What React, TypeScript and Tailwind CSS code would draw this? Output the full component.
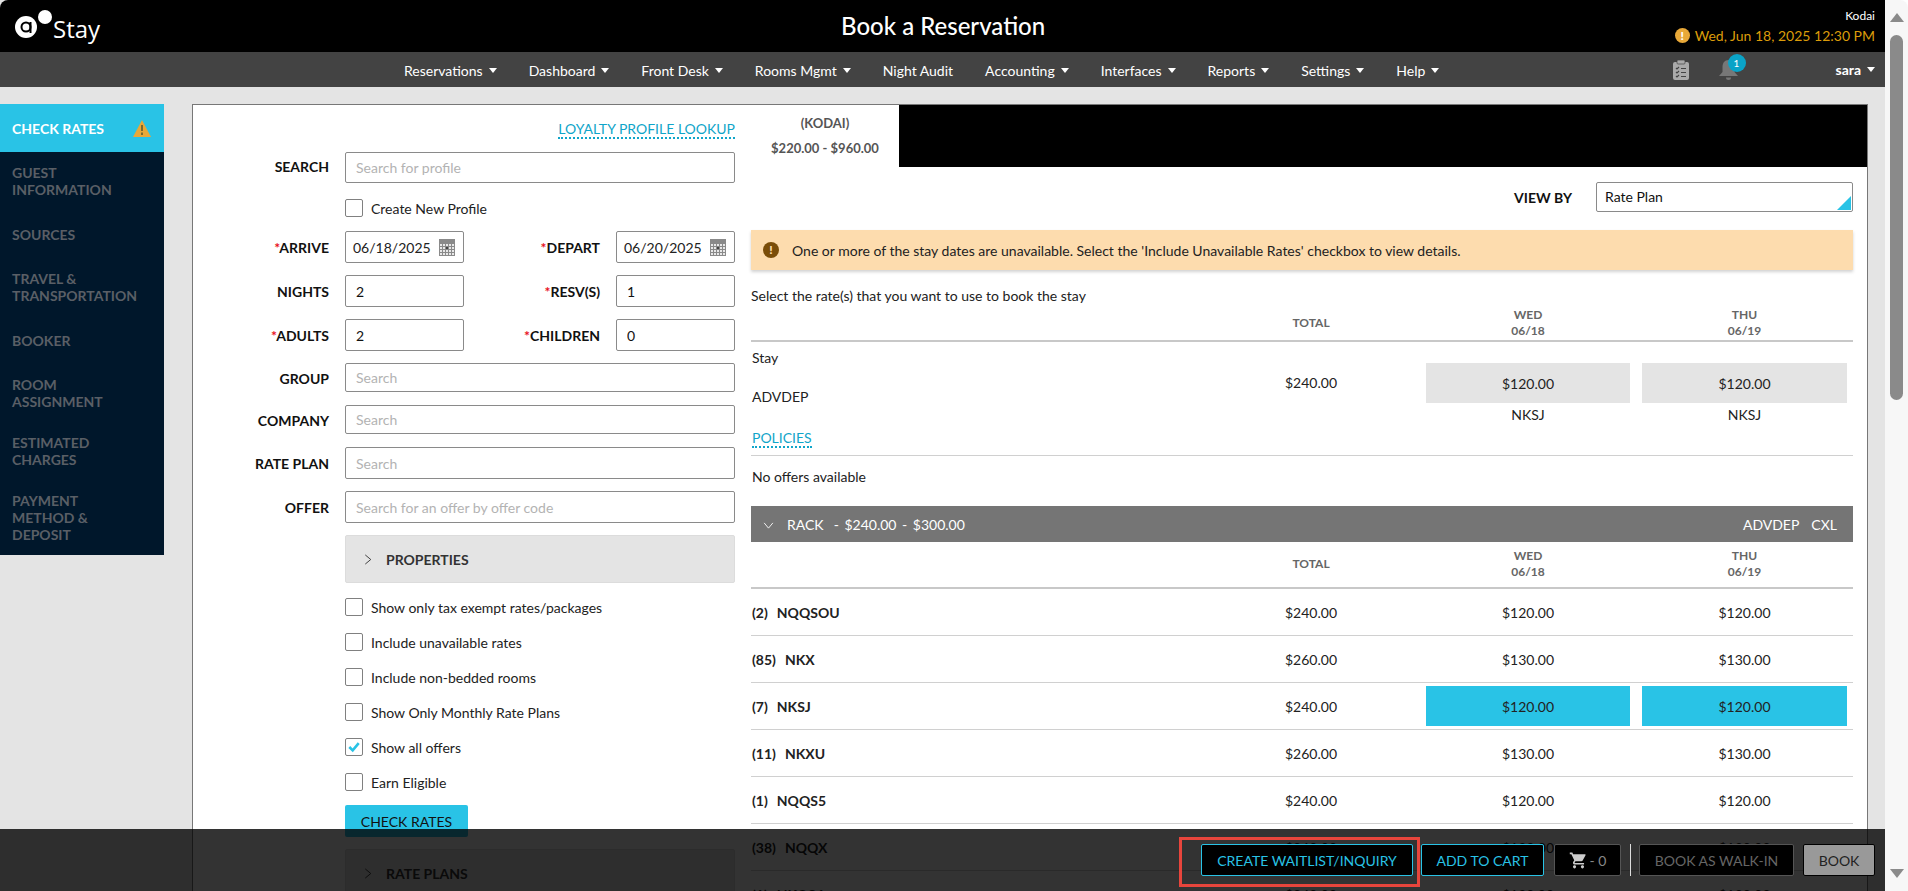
import { MdShoppingCart } from "react-icons/md";

const navItems = [
  { label: "Reservations", caret: true },
  { label: "Dashboard", caret: true },
  { label: "Front Desk", caret: true },
  { label: "Rooms Mgmt", caret: true },
  { label: "Night Audit", caret: false },
  { label: "Accounting", caret: true },
  { label: "Interfaces", caret: true },
  { label: "Reports", caret: true },
  { label: "Settings", caret: true },
  { label: "Help", caret: true },
];

const sideItems = [
  { lines: ["GUEST", "INFORMATION"], top: "mt-[12px]" },
  { lines: ["SOURCES"], top: "mt-[28px]" },
  { lines: ["TRAVEL &", "TRANSPORTATION"], top: "mt-[27px]" },
  { lines: ["BOOKER"], top: "mt-[28px]" },
  { lines: ["ROOM", "ASSIGNMENT"], top: "mt-[27px]" },
  { lines: ["ESTIMATED", "CHARGES"], top: "mt-[24px]" },
  { lines: ["PAYMENT", "METHOD &", "DEPOSIT"], top: "mt-[24px]" },
];

const checks = [
  { label: "Show only tax exempt rates/packages", on: false },
  { label: "Include unavailable rates", on: false },
  { label: "Include non-bedded rooms", on: false },
  { label: "Show Only Monthly Rate Plans", on: false },
  { label: "Show all offers", on: true },
  { label: "Earn Eligible", on: false },
];

const rates = [
  { count: "(2)", code: "NQQSOU", total: "$240.00", night: "$120.00" },
  { count: "(85)", code: "NKX", total: "$260.00", night: "$130.00" },
  { count: "(7)", code: "NKSJ", total: "$240.00", night: "$120.00", picked: true },
  { count: "(11)", code: "NKXU", total: "$260.00", night: "$130.00" },
  { count: "(1)", code: "NQQS5", total: "$240.00", night: "$120.00" },
  { count: "(38)", code: "NQQX", total: "$260.00", night: "$130.00" },
  { count: "(1)", code: "NKQS4", total: "$240.00", night: "$120.00" },
];

function Caret() {
  return <span className="ml-[6px] inline-block h-0 w-0 border-x-[4px] border-t-[5px] border-x-transparent border-t-white" />;
}

function CalendarIcon() {
  return (
    <svg viewBox="0 0 16 17" className="h-[17px] w-[16px] shrink-0" aria-hidden="true">
      <rect width="16" height="17" fill="#8a8a8a" />
      <g fill="#e8e8e8">
        {[5, 8, 11, 14].map((y) =>
          [1, 4, 7, 10, 13].map((x) => <rect key={`${x}-${y}`} x={x} y={y} width="2" height="2" />)
        )}
      </g>
      <rect x="7" y="8" width="2" height="2" fill="#444" />
    </svg>
  );
}

function Box({ on }: { on?: boolean }) {
  return (
    <span className="flex h-[18px] w-[18px] shrink-0 items-center justify-center rounded-[2px] border border-[#808080] bg-white">
      {on && (
        <svg viewBox="0 0 14 14" className="h-[12px] w-[12px]" aria-hidden="true">
          <path d="M1.5 7 L5.5 11 L12.5 2.5" fill="none" stroke="#29c3e6" strokeWidth="3" />
        </svg>
      )}
    </span>
  );
}

function FieldLabel({ text, required, className = "" }: { text: string; required?: boolean; className?: string }) {
  return (
    <label className={`${className} w-[136px] shrink-0 text-right text-[14px] font-bold text-[#111]`}>
      {required && <span className="text-[#e8101c]">*</span>}
      {text}
    </label>
  );
}

function Field({ value, placeholder, height = "h-[32px]", width = "w-[390px]" }: { value?: string; placeholder?: string; height?: string; width?: string }) {
  return (
    <input
      readOnly
      value={value}
      placeholder={placeholder}
      className={`${height} ${width} ml-[16px] rounded-[2px] border border-[#8a8a8a] bg-white px-[10px] text-[14px] text-[#111] outline-none placeholder:text-[#b3b3b3]`}
    />
  );
}

function DateField({ value }: { value: string }) {
  return (
    <div className="ml-[16px] flex h-[32px] w-[119px] items-center justify-between rounded-[2px] border border-[#8a8a8a] bg-white pl-[7px] pr-[8px] text-[14px] text-[#222]">
      <span>{value}</span>
      <CalendarIcon />
    </div>
  );
}

function Accordion({ title, className }: { title: string; className: string }) {
  return (
    <div className={`${className} flex h-[48px] w-[390px] shrink-0 items-center rounded-[2px] border border-[#dcdcdc] bg-[#e4e4e4] pl-[18px] text-[14px] font-bold text-[#333]`}>
      <svg viewBox="0 0 8 12" className="mr-[14px] h-[11px] w-[8px]" aria-hidden="true">
        <path d="M1 1 L7 6 L1 11" fill="none" stroke="#333" strokeWidth="1" />
      </svg>
      {title}
    </div>
  );
}

function DayHead({ inset }: { inset: string }) {
  return (
    <div className={`${inset} flex h-[47px] items-end border-b-2 border-[#c8c8c8] text-center text-[12px] font-bold leading-[16px] text-[#666]`}>
      <div className="w-[459px]" />
      <div className="flex h-[32px] w-[202px] items-center justify-center">TOTAL</div>
      <div className="ml-[14px] w-[204px]">
        WED
        <br />
        06/18
      </div>
      <div className="ml-[12px] w-[205px]">
        THU
        <br />
        06/19
      </div>
    </div>
  );
}

function RateRow({ count, code, total, night, picked }: { count: string; code: string; total: string; night: string; picked?: boolean }) {
  const cell = `flex h-[40px] items-center justify-center ${picked ? "bg-[#29c3e6]" : ""}`;
  return (
    <div className="flex h-[47px] items-center border-b border-[#d0d0d0] text-[14px] text-[#222]">
      <div className="w-[459px] pl-[1px] font-bold">
        {count}
        <span className="ml-[9px]">{code}</span>
      </div>
      <div className="w-[202px] text-center">{total}</div>
      <div className={`ml-[14px] w-[204px] ${cell}`}>{night}</div>
      <div className={`ml-[12px] w-[205px] ${cell}`}>{night}</div>
    </div>
  );
}

function FormColumn() {
  return (
    <div className="flex w-[542px] shrink-0 flex-col items-end pt-[16px]">
      <a className="h-[18px] border-b-2 border-dotted border-[#10a5c9] text-[14px] leading-[16px] text-[#10a5c9]">LOYALTY PROFILE LOOKUP</a>

      <div className="mt-[13px] flex w-full items-center">
        <FieldLabel text="SEARCH" className="-mt-[2px]" />
        <Field placeholder="Search for profile" height="h-[31px]" />
      </div>

      <div className="mt-[16px] flex w-[390px] items-center">
        <Box />
        <span className="ml-[8px] h-[18px] text-[14px] leading-[20px] text-[#222]">Create New Profile</span>
      </div>

      <div className="mt-[14px] flex w-full items-center">
        <FieldLabel text="ARRIVE" required />
        <DateField value="06/18/2025" />
        <FieldLabel text="DEPART" required />
        <DateField value="06/20/2025" />
      </div>

      <div className="mt-[12px] flex w-full items-center">
        <FieldLabel text="NIGHTS" />
        <Field value="2" width="w-[119px]" />
        <FieldLabel text="RESV(S)" required />
        <Field value="1" width="w-[119px]" />
      </div>

      <div className="mt-[12px] flex w-full items-center">
        <FieldLabel text="ADULTS" required />
        <Field value="2" width="w-[119px]" />
        <FieldLabel text="CHILDREN" required />
        <Field value="0" width="w-[119px]" />
      </div>

      <div className="mt-[12px] flex w-full items-center">
        <FieldLabel text="GROUP" className="mt-[2px]" />
        <Field placeholder="Search" height="h-[29px]" />
      </div>
      <div className="mt-[13px] flex w-full items-center">
        <FieldLabel text="COMPANY" className="mt-[2px]" />
        <Field placeholder="Search" height="h-[29px]" />
      </div>
      <div className="mt-[13px] flex w-full items-center">
        <FieldLabel text="RATE PLAN" />
        <Field placeholder="Search" />
      </div>
      <div className="mt-[12px] flex w-full items-center">
        <FieldLabel text="OFFER" />
        <Field placeholder="Search for an offer by offer code" />
      </div>

      <Accordion title="PROPERTIES" className="mt-[12px]" />

      <div className="mt-[15px] flex w-[390px] flex-col gap-[17px]">
        {checks.map((item) => (
          <div key={item.label} className="flex h-[18px] items-start">
            <Box on={item.on} />
            <span className="ml-[8px] h-[18px] text-[14px] leading-[20px] text-[#222]">{item.label}</span>
          </div>
        ))}
      </div>

      <div className="mt-[14px] w-[390px]">
        <button className="h-[32px] w-[123px] rounded-[2px] bg-[#29c3e6] text-[14px] text-[#111]">CHECK RATES</button>
      </div>

      <Accordion title="RATE PLANS" className="mt-[12px]" />
    </div>
  );
}

function RatesColumn() {
  return (
    <div className="min-w-0 flex-1">
      <div className="flex h-[62px] bg-black">
        <div className="flex w-[148px] flex-col items-center bg-white pt-[9px] text-[13px] font-bold text-[#555]">
          <div className="leading-[18px]">(KODAI)</div>
          <div className="mt-[7px] leading-[18px]">$220.00 - $960.00</div>
        </div>
      </div>

      <div className="w-[1102px]">
        <div className="mt-[15px] flex items-center justify-end">
          <span className="mr-[24px] text-[14px] font-bold text-[#111]">VIEW BY</span>
          <div className="relative flex h-[30px] w-[257px] items-center rounded-[2px] border border-[#8a8a8a] pb-[1px] pl-[8px] text-[14px] text-[#111]">
            Rate Plan
            <span className="absolute bottom-[1px] right-[1px] h-0 w-0 border-b-[14px] border-l-[14px] border-b-[#29c3e6] border-l-transparent" />
          </div>
        </div>

        <div className="mt-[18px] flex h-[40px] items-center bg-[#fddcae] pl-[12px] text-[14px] text-[#222] shadow-[0_2px_3px_rgba(0,0,0,0.18)]">
          <span className="mr-[13px] flex h-[16px] w-[16px] items-center justify-center rounded-full bg-[#7a4d08] text-[12px] font-black leading-none text-[#fddcae]">!</span>
          One or more of the stay dates are unavailable. Select the 'Include Unavailable Rates' checkbox to view details.
        </div>

        <div className="relative h-[72px]">
          <div className="absolute left-0 top-[17px] text-[14px] leading-[18px] text-[#222]">Select the rate(s) that you want to use to book the stay</div>
          <div className="absolute inset-x-0 bottom-0">
            <DayHead inset="pb-[1px]" />
          </div>
        </div>

        <div className="flex h-[114px] border-b border-[#d0d0d0] text-[14px] text-[#222]">
          <div className="flex w-[459px] flex-col pl-[1px]">
            <div className="mt-[7px] leading-[18px]">Stay</div>
            <div className="mt-[21px] leading-[18px]">ADVDEP</div>
            <div className="mt-[21px]">
              <a className="inline-block h-[18px] border-b-2 border-dotted border-[#10a5c9] leading-[16px] text-[#10a5c9]">POLICIES</a>
            </div>
          </div>
          <div className="w-[202px] pt-[31px] text-center leading-[20px]">$240.00</div>
          <div className="ml-[14px] w-[204px] pt-[21px] text-center">
            <div className="flex h-[40px] items-center justify-center bg-[#e4e4e4]">$120.00</div>
            <div className="mt-[3px] leading-[18px]">NKSJ</div>
          </div>
          <div className="ml-[12px] w-[205px] pt-[21px] text-center">
            <div className="flex h-[40px] items-center justify-center bg-[#e4e4e4]">$120.00</div>
            <div className="mt-[3px] leading-[18px]">NKSJ</div>
          </div>
        </div>

        <div className="flex h-[50px] items-start pl-[1px] pt-[12px] text-[14px] leading-[18px] text-[#222]">No offers available</div>

        <div className="flex h-[36px] items-center bg-[#757575] pl-[12px] pr-[16px] text-[14px] text-white">
          <svg viewBox="0 0 12 8" className="mr-[13px] mt-[2px] h-[7px] w-[11px]" aria-hidden="true">
            <path d="M1 1 L6 7 L11 1" fill="none" stroke="#fff" strokeWidth="1" />
          </svg>
          RACK
          <span className="ml-[10px] [word-spacing:2px]">- $240.00 - $300.00</span>
          <span className="ml-auto">ADVDEP</span>
          <span className="ml-[12px]">CXL</span>
        </div>

        <DayHead inset="pb-[7px]" />
        {rates.map((row) => (
          <RateRow key={row.code} {...row} />
        ))}
      </div>
    </div>
  );
}

function Footer() {
  const base = "flex h-[32px] items-center justify-center rounded-[2px] border text-[14px]";
  return (
    <div className="absolute inset-x-0 bottom-0 flex h-[62px] items-start justify-end bg-[rgba(0,0,0,0.8)] pr-[10px] pt-[15px]">
      <div className="relative">
        <button className={`${base} w-[212px] border-[#29c3e6] bg-black text-[#29c3e6]`}>CREATE WAITLIST/INQUIRY</button>
        <span className="absolute -bottom-[11px] -left-[22px] -right-[7px] -top-[7px] border-[3px] border-[#e8453c]" />
      </div>
      <button className={`${base} ml-[8px] w-[123px] border-[#29c3e6] bg-black text-[#29c3e6]`}>ADD TO CART</button>
      <button className={`${base} ml-[10px] w-[67px] border-[#555] bg-black text-[#888]`}>
        <MdShoppingCart className="mr-[2px] h-[19px] w-[19px] text-[#ccc]" />- 0
      </button>
      <span className="ml-[9px] h-[32px] w-px bg-[#ddd]" />
      <button className={`${base} ml-[8px] w-[155px] border-[#555] bg-black text-[#666]`}>BOOK AS WALK-IN</button>
      <button className={`${base} ml-[9px] w-[72px] border-black bg-[#999] text-[#222]`}>BOOK</button>
    </div>
  );
}

function Scrollbar() {
  return (
    <div className="flex w-[23px] shrink-0 flex-col items-center rounded-tr-[8px] bg-[#f7f7f7]">
      <span className="mt-[13px] h-0 w-0 border-x-[7px] border-b-[9px] border-x-transparent border-b-[#8a8a8a]" />
      <span className="mt-[13px] h-[365px] w-[13px] rounded-full bg-[#8a8a8a]" />
      <span className="mt-[469px] h-0 w-0 border-x-[7px] border-t-[9px] border-x-transparent border-t-[#8a8a8a]" />
    </div>
  );
}

export default function App() {
  return (
    <div className="flex h-[891px] w-full overflow-hidden bg-white font-['Lato',sans-serif]">
      <div className="relative flex min-w-0 flex-1 flex-col overflow-hidden bg-[#e4e4e4]">
        <header className="relative flex h-[52px] shrink-0 items-center rounded-tl-[8px] bg-black text-white">
          <svg viewBox="0 0 56 44" className="-mt-[8px] ml-[10px] h-[44px] w-[56px]" aria-hidden="true">
            <circle cx="16" cy="27" r="11" fill="#fff" />
            <circle cx="35" cy="17" r="7" fill="#fff" />
            <circle cx="16" cy="27" r="4.5" fill="none" stroke="#000" strokeWidth="2" />
            <path d="M20.5 22 V33" stroke="#000" strokeWidth="2" fill="none" />
          </svg>
          <span className="ml-[-13px] mt-[5px] font-['Open_Sans',sans-serif] text-[24px] leading-none">Stay</span>
          <h1 className="absolute left-[841px] top-[10px] text-[24px] font-medium leading-[32px]">Book a Reservation</h1>
          <div className="ml-auto mr-[10px] mt-[1px] text-right">
            <div className="text-[12px] leading-[16px]">Kodai</div>
            <div className="mt-[2px] flex items-center text-[14px] leading-[20px] text-[#dc9c0a]">
              <span className="mr-[5px] flex h-[15px] w-[15px] items-center justify-center rounded-full bg-[#e8a838] text-[12px] font-black text-white">!</span>
              Wed, Jun 18, 2025 12:30 PM
            </div>
          </div>
        </header>

        <nav className="flex h-[35px] shrink-0 items-center bg-[#434343] pl-[404px] pr-[10px] text-[14px] text-white">
          {navItems.map((item) => (
            <span key={item.label} className="mr-[32px] flex items-center whitespace-nowrap pt-[1px]">
              {item.label}
              {item.caret && <Caret />}
            </span>
          ))}
          <svg viewBox="0 0 16 20" className="ml-auto h-[20px] w-[16px]" aria-hidden="true">
            <rect y="2" width="16" height="18" rx="2" fill="#aaa" />
            <rect x="4" width="8" height="4" rx="1" fill="#aaa" stroke="#434343" strokeWidth="0.7" />
            <path d="M3 8 L4 9 L6 7 M3 12 L4 13 L6 11 M3 16 L4 17 L6 15 M8 8.5 H13 M8 12.5 H13 M8 16.5 H13" stroke="#434343" strokeWidth="1.1" fill="none" />
          </svg>
          <div className="relative ml-[30px] h-[20px] w-[19px]">
            <svg viewBox="0 0 19 20" className="h-[20px] w-[19px]" aria-hidden="true">
              <path d="M9.5 0 C13.5 0 15.5 3 15.5 7 V12 L19 16 H0 L3.5 12 V7 C3.5 3 5.5 0 9.5 0 Z" fill="#777" />
              <path d="M7 17.5 H12 A2.5 2.5 0 0 1 7 17.5 Z" fill="#777" />
            </svg>
            <span className="absolute -right-[8px] -top-[6px] flex h-[18px] w-[18px] items-center justify-center rounded-full bg-[#0aa3c7] text-[10px] leading-none text-white">1</span>
          </div>
          <span className="ml-[98px] flex items-center font-bold leading-none">
            sara
            <Caret />
          </span>
        </nav>

        <main className="flex min-h-0 flex-1 items-start pt-[17px]">
          <aside className="h-[451px] w-[164px] shrink-0 bg-[#00172b]">
            <div className="flex h-[48px] items-center justify-between bg-[#29c3e6] pl-[12px] pr-[13px] text-[14px] font-bold text-white">
              CHECK RATES
              <svg viewBox="0 0 18 17" className="h-[17px] w-[18px]" aria-hidden="true">
                <path d="M9 0 L18 17 H0 Z" fill="#e8a838" />
                <path d="M9 5 V11 M9 12.5 V15" stroke="#7a6a30" strokeWidth="2" fill="none" />
              </svg>
            </div>
            {sideItems.map((item) => (
              <div key={item.lines[0]} className={`${item.top} pl-[12px] text-[14px] font-bold leading-[17px] text-[#5a5f66]`}>
                {item.lines.map((line) => (
                  <div key={line}>{line}</div>
                ))}
              </div>
            ))}
          </aside>

          <section className="ml-[28px] flex h-[900px] w-[1676px] shrink-0 border border-[#777] bg-white">
            <FormColumn />
            <div className="w-[16px] shrink-0" />
            <RatesColumn />
          </section>
        </main>

        <Footer />
      </div>
      <Scrollbar />
    </div>
  );
}
